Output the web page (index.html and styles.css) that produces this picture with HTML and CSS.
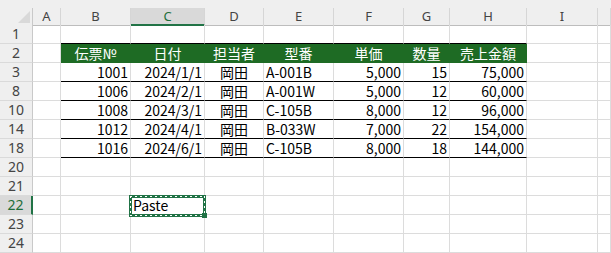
FILE: index.html
```html
<!DOCTYPE html>
<html lang="ja">
<head>
<meta charset="utf-8">
<link rel="stylesheet" href="styles.css">
</head>
<body>
<div class="sheet">
  <div class="topband"></div>
  <div class="row colhdr">
    <div class="corner"><span class="tri"></span></div>
    <div class="ch">A</div><div class="ch">B</div><div class="ch cur">C</div><div class="ch">D</div><div class="ch">E</div><div class="ch">F</div><div class="ch">G</div><div class="ch">H</div><div class="ch">I</div><div class="ch"></div>
  </div>
  <div class="row">
    <div class="rh">1</div><div class="c"></div><div class="c tb"></div><div class="c tb"></div><div class="c tb"></div><div class="c tb"></div><div class="c tb"></div><div class="c tb"></div><div class="c tb"></div><div class="c"></div><div class="c"></div>
  </div>
  <div class="row">
    <div class="rh">2</div><div class="c"></div><div class="c th">伝票№</div><div class="c th">日付</div><div class="c th">担当者</div><div class="c th">型番</div><div class="c th">単価</div><div class="c th">数量</div><div class="c th">売上金額</div><div class="c"></div><div class="c"></div>
  </div>
  <div class="row">
    <div class="rh">3</div><div class="c"></div><div class="c tb r">1001</div><div class="c tb r">2024/1/1</div><div class="c tb m">岡田</div><div class="c tb">A-001B</div><div class="c tb r">5,000</div><div class="c tb r">15</div><div class="c tb r">75,000</div><div class="c"></div><div class="c"></div>
  </div>
  <div class="row">
    <div class="rh">8</div><div class="c"></div><div class="c tb r">1006</div><div class="c tb r">2024/2/1</div><div class="c tb m">岡田</div><div class="c tb">A-001W</div><div class="c tb r">5,000</div><div class="c tb r">12</div><div class="c tb r">60,000</div><div class="c"></div><div class="c"></div>
  </div>
  <div class="row">
    <div class="rh">10</div><div class="c"></div><div class="c tb r">1008</div><div class="c tb r">2024/3/1</div><div class="c tb m">岡田</div><div class="c tb">C-105B</div><div class="c tb r">8,000</div><div class="c tb r">12</div><div class="c tb r">96,000</div><div class="c"></div><div class="c"></div>
  </div>
  <div class="row">
    <div class="rh">14</div><div class="c"></div><div class="c tb r">1012</div><div class="c tb r">2024/4/1</div><div class="c tb m">岡田</div><div class="c tb">B-033W</div><div class="c tb r">7,000</div><div class="c tb r">22</div><div class="c tb r">154,000</div><div class="c"></div><div class="c"></div>
  </div>
  <div class="row">
    <div class="rh">18</div><div class="c"></div><div class="c tb r">1016</div><div class="c tb r">2024/6/1</div><div class="c tb m">岡田</div><div class="c tb">C-105B</div><div class="c tb r">8,000</div><div class="c tb r">18</div><div class="c tb r">144,000</div><div class="c"></div><div class="c"></div>
  </div>
  <div class="row">
    <div class="rh">20</div><div class="c"></div><div class="c"></div><div class="c"></div><div class="c"></div><div class="c"></div><div class="c"></div><div class="c"></div><div class="c"></div><div class="c"></div><div class="c"></div>
  </div>
  <div class="row">
    <div class="rh">21</div><div class="c"></div><div class="c"></div><div class="c"></div><div class="c"></div><div class="c"></div><div class="c"></div><div class="c"></div><div class="c"></div><div class="c"></div><div class="c"></div>
  </div>
  <div class="row">
    <div class="rh cur">22</div><div class="c"></div><div class="c"></div><div class="c active">Paste<span class="ants"></span></div><div class="c"></div><div class="c"></div><div class="c"></div><div class="c"></div><div class="c"></div><div class="c"></div><div class="c"></div>
  </div>
  <div class="row">
    <div class="rh">23</div><div class="c"></div><div class="c"></div><div class="c"></div><div class="c"></div><div class="c"></div><div class="c"></div><div class="c"></div><div class="c"></div><div class="c"></div><div class="c"></div>
  </div>
  <div class="row">
    <div class="rh">24</div><div class="c"></div><div class="c"></div><div class="c"></div><div class="c"></div><div class="c"></div><div class="c"></div><div class="c"></div><div class="c"></div><div class="c"></div><div class="c"></div>
  </div>
</div>
</body>
</html>
```
FILE: styles.css
```css
* { box-sizing: border-box; }
html, body { margin: 0; padding: 0; background: #fff; }
body { width: 611px; height: 253px; overflow: hidden; }

.sheet {
  display: flex;
  flex-direction: column;
  font-family: "Noto Sans CJK JP", "Noto Sans", sans-serif;
  font-size: 14px;
  color: #000;
}

.topband { height: 8px; background: #efefef; }

.row {
  display: grid;
  grid-template-columns: 33px 28px 70px 74px 59px 70px 70px 46px 77px 71px 1fr;
  height: 19px;
}

.colhdr { height: 17px; background: #efefef; }

.corner {
  border-right: 1px solid #c9c9c9;
  border-bottom: 1px solid #bdbdbd;
  display: flex;
  justify-content: flex-end;
  align-items: flex-end;
  padding: 0 2px 2px 0;
}
.tri {
  width: 0; height: 0;
  border-left: 12px solid transparent;
  border-bottom: 12px solid #d9d9d9;
}

.ch {
  font-family: "Noto Sans", "Open Sans", sans-serif;
  font-size: 13px;
  color: #444;
  text-align: center;
  line-height: 15px;
  border-right: 1px solid #d6d6d6;
  border-bottom: 1px solid #bdbdbd;
  padding-top: 1px;
}
.ch.cur {
  background: #d9d9d9;
  color: #1e6e3a;
  border-bottom: 2px solid #217346;
}

.rh {
  background: #efefef;
  font-family: "Noto Sans", "Open Sans", sans-serif;
  font-size: 14px;
  color: #444;
  text-align: center;
  line-height: 18px;
  border-right: 1px solid #c9c9c9;
  border-bottom: 1px solid #dadada;
}
.rh.cur {
  background: #d9d9d9;
  color: #1e6e3a;
  border-right: 2px solid #217346;
}

.c {
  border-right: 1px solid #dcdcdc;
  border-bottom: 1px solid #dcdcdc;
  line-height: 18px;
  padding: 0 2px;
  white-space: nowrap;
  overflow: visible;
}
.c.tb { border-bottom-color: #000; }
.c.r { text-align: right; }
.c.m { text-align: center; }
.c.th {
  background: #1e6b24;
  color: #fff;
  text-align: center;
  border-right-color: #1e6b24;
  border-bottom-color: #1e6b24;
}

.c.active { position: relative; }
.ants {
  position: absolute;
  top: -1px; left: -2px; right: -2px; bottom: -3px;
  border: 3px solid #217346;
}
.ants::after {
  content: "";
  position: absolute;
  top: -2px; left: -2px; right: -2px; bottom: -2px;
  background:
    repeating-linear-gradient(90deg, #fff 0 2px, transparent 2px 5px) left top / 100% 1px no-repeat,
    repeating-linear-gradient(90deg, #fff 0 2px, transparent 2px 5px) left bottom / 100% 1px no-repeat,
    repeating-linear-gradient(180deg, #fff 0 2px, transparent 2px 5px) left top / 1px 100% no-repeat,
    repeating-linear-gradient(180deg, #fff 0 2px, transparent 2px 5px) right top / 1px 100% no-repeat;
}
.ants::before {
  content: "";
  position: absolute;
  right: -4px; bottom: -4px;
  width: 5px; height: 5px;
  background: #217346;
  z-index: 1;
}
```
